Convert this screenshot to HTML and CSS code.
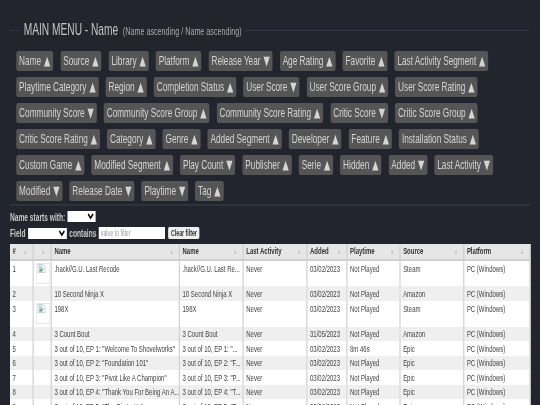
FILE: index.html
```html
<!DOCTYPE html>
<html lang="en">
<head>
<meta charset="utf-8">
<title>Main menu</title>
<link rel="stylesheet" href="styles.css">
</head>
<body>
<div class="page">
  <fieldset class="menu">
    <legend class="menu-title">MAIN MENU - Name <small>(Name ascending / Name ascending)</small></legend>
    <div class="sorts">
      <button class="sort">Name <i>▲</i></button><button class="sort">Source <i>▲</i></button><button class="sort">Library <i>▲</i></button><button class="sort">Platform <i>▲</i></button><button class="sort">Release Year <i>▼</i></button><button class="sort">Age Rating <i>▲</i></button><button class="sort">Favorite <i>▲</i></button><button class="sort">Last Activity Segment <i>▲</i></button>
      <button class="sort">Playtime Category <i>▲</i></button><button class="sort">Region <i>▲</i></button><button class="sort">Completion Status <i>▲</i></button><button class="sort">User Score <i>▼</i></button><button class="sort">User Score Group <i>▲</i></button><button class="sort">User Score Rating <i>▲</i></button>
      <button class="sort">Community Score <i>▼</i></button><button class="sort">Community Score Group <i>▲</i></button><button class="sort">Community Score Rating <i>▲</i></button><button class="sort">Critic Score <i>▼</i></button><button class="sort">Critic Score Group <i>▲</i></button>
      <button class="sort">Critic Score Rating <i>▲</i></button><button class="sort">Category <i>▲</i></button><button class="sort">Genre <i>▲</i></button><button class="sort">Added Segment <i>▲</i></button><button class="sort">Developer <i>▲</i></button><button class="sort">Feature <i>▲</i></button><button class="sort">Installation Status <i>▲</i></button>
      <button class="sort">Custom Game <i>▲</i></button><button class="sort">Modified Segment <i>▲</i></button><button class="sort">Play Count <i>▼</i></button><button class="sort">Publisher <i>▲</i></button><button class="sort">Serie <i>▲</i></button><button class="sort">Hidden <i>▲</i></button><button class="sort">Added <i>▼</i></button><button class="sort">Last Activity <i>▼</i></button>
      <button class="sort">Modified <i>▼</i></button><button class="sort">Release Date <i>▼</i></button><button class="sort">Playtime <i>▼</i></button><button class="sort">Tag <i>▲</i></button>
    </div>
  </fieldset>
  <hr class="rule">
  <div class="filter first">
    <label>Name starts with:</label>
    <select class="sel-letter"><option></option></select>
  </div>
  <div class="filter">
    <label>Field</label>
    <select class="sel-field"><option></option></select>
    <label>contains</label>
    <input class="value" placeholder="value to filter">
    <button class="clear">Clear filter</button>
  </div>
  <table class="games">
    <colgroup>
      <col class="c-num"><col class="c-img"><col class="c-name"><col class="c-short"><col class="c-act"><col class="c-add"><col class="c-play"><col class="c-src"><col class="c-plat">
    </colgroup>
    <thead>
      <tr><th>#</th><th></th><th>Name</th><th>Name</th><th>Last Activity</th><th>Added</th><th>Playtime</th><th>Source</th><th>Platform</th></tr>
    </thead>
    <tbody>
      <tr class="tall"><td>1</td><td class="cover"><span class="thumb"><svg viewBox="0 0 12 12" preserveAspectRatio="none" class="broken"><path d="M.5.5H8L11.5 4V11.5H.5Z" fill="#fff" stroke="#a9b4bd"/><path d="M2 2H7V5H10V7L6 10H2Z" fill="#b9d2ea"/><path d="M2 10L5 6L8 10Z" fill="#5fae52"/></svg></span></td><td>.hack//G.U. Last Recode</td><td>.hack//G.U. Last Re...</td><td>Never</td><td>03/02/2023</td><td>Not Played</td><td>Steam</td><td>PC (Windows)</td></tr>
      <tr><td>2</td><td></td><td>10 Second Ninja X</td><td>10 Second Ninja X</td><td>Never</td><td>03/02/2023</td><td>Not Played</td><td>Amazon</td><td>PC (Windows)</td></tr>
      <tr class="tall"><td>3</td><td class="cover"><span class="thumb"><svg viewBox="0 0 12 12" preserveAspectRatio="none" class="broken"><path d="M.5.5H8L11.5 4V11.5H.5Z" fill="#fff" stroke="#a9b4bd"/><path d="M2 2H7V5H10V7L6 10H2Z" fill="#b9d2ea"/><path d="M2 10L5 6L8 10Z" fill="#5fae52"/></svg></span></td><td>198X</td><td>198X</td><td>Never</td><td>03/02/2023</td><td>Not Played</td><td>Steam</td><td>PC (Windows)</td></tr>
      <tr><td>4</td><td></td><td>3 Count Bout</td><td>3 Count Bout</td><td>Never</td><td>31/05/2023</td><td>Not Played</td><td>Amazon</td><td>PC (Windows)</td></tr>
      <tr><td>5</td><td></td><td>3 out of 10, EP 1: "Welcome To Shovelworks"</td><td>3 out of 10, EP 1: "...</td><td>Never</td><td>03/02/2023</td><td>8m 46s</td><td>Epic</td><td>PC (Windows)</td></tr>
      <tr><td>6</td><td></td><td>3 out of 10, EP 2: "Foundation 101"</td><td>3 out of 10, EP 2: "F...</td><td>Never</td><td>03/02/2023</td><td>Not Played</td><td>Epic</td><td>PC (Windows)</td></tr>
      <tr><td>7</td><td></td><td>3 out of 10, EP 3: "Pivot Like A Champion"</td><td>3 out of 10, EP 3: "P...</td><td>Never</td><td>03/02/2023</td><td>Not Played</td><td>Epic</td><td>PC (Windows)</td></tr>
      <tr><td>8</td><td></td><td>3 out of 10, EP 4: "Thank You For Being An A...</td><td>3 out of 10, EP 4: "T...</td><td>Never</td><td>03/02/2023</td><td>Not Played</td><td>Epic</td><td>PC (Windows)</td></tr>
      <tr><td>9</td><td></td><td>3 out of 10, EP 5: "The Rig Is Up"</td><td>3 out of 10, EP 5: "T...</td><td>Never</td><td>03/02/2023</td><td>Not Played</td><td>Epic</td><td>PC (Windows)</td></tr>
    </tbody>
  </table>
</div>
</body>
</html>
```
FILE: styles.css
```css
html, body {
  margin: 0;
  height: 405px;
  overflow: hidden;
  background: #22252e;
}
.page {
  box-sizing: border-box;
  width: 864px;
  height: 405px;
  overflow: hidden;
  padding: 22px 16px 0;
  transform: scaleX(.625);
  transform-origin: 0 0;
  filter: blur(.35px);
  font-family: "Liberation Sans", Arial, sans-serif;
}
.menu {
  margin: 0;
  padding: 13px 0 0 10px;
  border: 0;
  border-top: 1px solid #333644;
  height: 168px;
  box-sizing: content-box;
  min-width: 0;
}
.menu-title {
  margin-left: 6px;
  padding: 0 6px;
  font-size: 16.3px;
  line-height: 14px;
  color: #c4c4c4;
}
.menu-title small {
  font-size: 11.5px;
  padding-left: 3px;
  color: #aaa;
}
.sorts {
  display: flex;
  flex-wrap: wrap;
  gap: 6px 11.5px;
}
.sort {
  height: 20px;
  padding: 0 4.6px;
  border: 0;
  border-radius: 3px;
  background: #555;
  color: #d4d4d4;
  font: 13.2px/20px "Liberation Sans", Arial, sans-serif;
  white-space: nowrap;
}
.sort i {
  margin-left: 1px;
  font: normal 13px/16px "DejaVu Sans", sans-serif;
}
.rule {
  margin: 0;
  border: 0;
  border-top: 2px solid #2b353c;
}
.filter {
  display: flex;
  align-items: center;
  gap: 4px;
  height: 12px;
  margin-top: 4px;
  color: #c8c8c8;
  font-size: 10.6px;
  font-weight: bold;
  white-space: nowrap;
}
.filter.first {
  margin-top: 5px;
  height: 11px;
  margin-bottom: 5px;
}
.filter select {
  height: 11px;
  padding: 0;
  border: 0;
  background: #fff;
  font-size: 8px;
}
.sel-letter { width: 45px; }
.sel-field { width: 62px; }
.value {
  box-sizing: border-box;
  width: 106px;
  height: 12px;
  padding: 0 3px;
  border: 0;
  font-size: 8.4px;
}
.value::placeholder { color: #999; }
.clear {
  width: 50px;
  height: 12px;
  margin-left: 1px;
  padding: 0;
  border: 0;
  border-radius: 2px;
  background: #efefef;
  color: #333;
  white-space: nowrap;
  font: bold 8.4px/12px "Liberation Sans", Arial, sans-serif;
}
.games {
  width: 832px;
  margin-top: 5px;
  table-layout: fixed;
  border-collapse: collapse;
  background: #fff;
  color: #444;
  font-size: 9.6px;
}
.c-num { width: 37px; }
.c-img { width: 29px; }
.c-name { width: 205px; }
.c-short { width: 102px; }
.c-act { width: 102px; }
.c-add { width: 64px; }
.c-play { width: 85px; }
.c-src { width: 102px; }
.c-plat { width: 106px; }
.games th {
  height: 15px;
  padding: 1px 3px 0 4px;
  background: #e6e6e6;
  border: 1px solid #cfcfcf;
  border-width: 0 2px 2px 0;
  text-align: left;
  color: #333;
  box-sizing: border-box;
}
.games th::after {
  content: "▲";
  float: right;
  margin-right: 5px;
  color: #c6c6c6;
  font-size: 7px;
  line-height: 14px;
}
.games td {
  height: 14.5px;
  padding: 0 3px 0 4px;
  border-right: 2px solid #d2d2d2;
  box-sizing: border-box;
  white-space: nowrap;
  overflow: hidden;
}
.games tr.tall { height: 26px; }
.games tr.tall td { height: 26px; vertical-align: top; padding-top: 2px; }
.games tbody tr:nth-child(even) { background: #efefef; }
.games tr.tall td.cover { padding: 2px 0 0 4px; }
.thumb {
  display: block;
  box-sizing: border-box;
  width: 22px;
  height: 21px;
  padding: 0 1px;
  border: 1px solid #e4e4e4;
}
.broken {
  display: block;
  width: 13px;
  height: 9px;
}
```
